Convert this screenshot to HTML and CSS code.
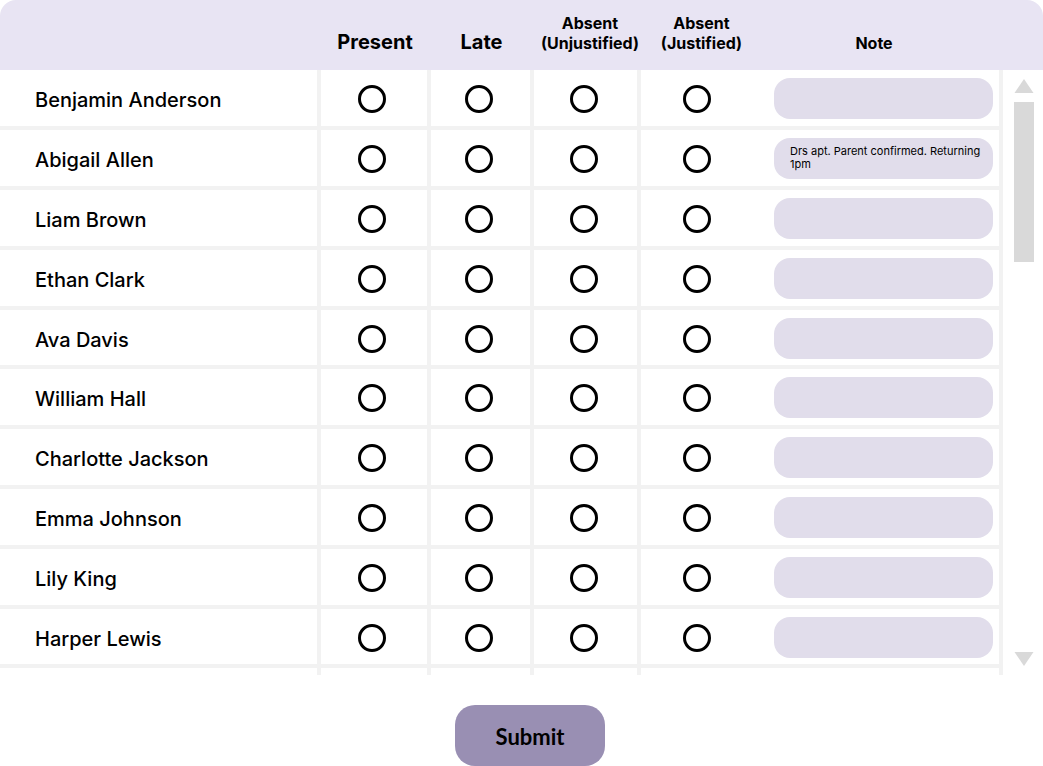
FILE: index.html
```html
<!DOCTYPE html>
<html lang="en">
<head>
<meta charset="utf-8">
<meta name="viewport" content="width=device-width, initial-scale=1">
<title>Attendance</title>
<link rel="stylesheet" href="styles.css">
</head>
<body>
<form class="attendance">
  <div class="sheet">
    <table class="roster">
      <colgroup>
        <col class="col-name"><col class="col-present"><col class="col-late"><col class="col-unjustified"><col class="col-justified"><col class="col-note">
      </colgroup>
      <thead>
        <tr>
          <td></td>
          <th scope="col" class="large">Present</th>
          <th scope="col" class="large">Late</th>
          <th scope="col" class="small">Absent<br>(Unjustified)</th>
          <th scope="col" class="small">Absent<br>(Justified)</th>
          <th scope="col" class="note-head">Note</th>
        </tr>
      </thead>
      <tbody>
        <tr>
          <th scope="row">Benjamin Anderson</th>
          <td><input type="radio" name="s1" aria-label="Present"></td>
          <td><input type="radio" name="s1" aria-label="Late"></td>
          <td><input type="radio" name="s1" aria-label="Absent (Unjustified)"></td>
          <td class="open"><input type="radio" name="s1" aria-label="Absent (Justified)"></td>
          <td class="note"><textarea rows="2" aria-label="Note"></textarea></td>
        </tr>
        <tr>
          <th scope="row">Abigail Allen</th>
          <td><input type="radio" name="s2" aria-label="Present"></td>
          <td><input type="radio" name="s2" aria-label="Late"></td>
          <td><input type="radio" name="s2" aria-label="Absent (Unjustified)"></td>
          <td class="open"><input type="radio" name="s2" aria-label="Absent (Justified)"></td>
          <td class="note"><textarea rows="2" aria-label="Note">Drs apt. Parent confirmed. Returning 1pm</textarea></td>
        </tr>
        <tr>
          <th scope="row">Liam Brown</th>
          <td><input type="radio" name="s3" aria-label="Present"></td>
          <td><input type="radio" name="s3" aria-label="Late"></td>
          <td><input type="radio" name="s3" aria-label="Absent (Unjustified)"></td>
          <td class="open"><input type="radio" name="s3" aria-label="Absent (Justified)"></td>
          <td class="note"><textarea rows="2" aria-label="Note"></textarea></td>
        </tr>
        <tr>
          <th scope="row">Ethan Clark</th>
          <td><input type="radio" name="s4" aria-label="Present"></td>
          <td><input type="radio" name="s4" aria-label="Late"></td>
          <td><input type="radio" name="s4" aria-label="Absent (Unjustified)"></td>
          <td class="open"><input type="radio" name="s4" aria-label="Absent (Justified)"></td>
          <td class="note"><textarea rows="2" aria-label="Note"></textarea></td>
        </tr>
        <tr>
          <th scope="row">Ava Davis</th>
          <td><input type="radio" name="s5" aria-label="Present"></td>
          <td><input type="radio" name="s5" aria-label="Late"></td>
          <td><input type="radio" name="s5" aria-label="Absent (Unjustified)"></td>
          <td class="open"><input type="radio" name="s5" aria-label="Absent (Justified)"></td>
          <td class="note"><textarea rows="2" aria-label="Note"></textarea></td>
        </tr>
        <tr>
          <th scope="row">William Hall</th>
          <td><input type="radio" name="s6" aria-label="Present"></td>
          <td><input type="radio" name="s6" aria-label="Late"></td>
          <td><input type="radio" name="s6" aria-label="Absent (Unjustified)"></td>
          <td class="open"><input type="radio" name="s6" aria-label="Absent (Justified)"></td>
          <td class="note"><textarea rows="2" aria-label="Note"></textarea></td>
        </tr>
        <tr>
          <th scope="row">Charlotte Jackson</th>
          <td><input type="radio" name="s7" aria-label="Present"></td>
          <td><input type="radio" name="s7" aria-label="Late"></td>
          <td><input type="radio" name="s7" aria-label="Absent (Unjustified)"></td>
          <td class="open"><input type="radio" name="s7" aria-label="Absent (Justified)"></td>
          <td class="note"><textarea rows="2" aria-label="Note"></textarea></td>
        </tr>
        <tr>
          <th scope="row">Emma Johnson</th>
          <td><input type="radio" name="s8" aria-label="Present"></td>
          <td><input type="radio" name="s8" aria-label="Late"></td>
          <td><input type="radio" name="s8" aria-label="Absent (Unjustified)"></td>
          <td class="open"><input type="radio" name="s8" aria-label="Absent (Justified)"></td>
          <td class="note"><textarea rows="2" aria-label="Note"></textarea></td>
        </tr>
        <tr>
          <th scope="row">Lily King</th>
          <td><input type="radio" name="s9" aria-label="Present"></td>
          <td><input type="radio" name="s9" aria-label="Late"></td>
          <td><input type="radio" name="s9" aria-label="Absent (Unjustified)"></td>
          <td class="open"><input type="radio" name="s9" aria-label="Absent (Justified)"></td>
          <td class="note"><textarea rows="2" aria-label="Note"></textarea></td>
        </tr>
        <tr>
          <th scope="row">Harper Lewis</th>
          <td><input type="radio" name="s10" aria-label="Present"></td>
          <td><input type="radio" name="s10" aria-label="Late"></td>
          <td><input type="radio" name="s10" aria-label="Absent (Unjustified)"></td>
          <td class="open"><input type="radio" name="s10" aria-label="Absent (Justified)"></td>
          <td class="note"><textarea rows="2" aria-label="Note"></textarea></td>
        </tr>
      </tbody>
      <tfoot aria-hidden="true">
        <tr><td></td><td></td><td></td><td></td><td class="open"></td><td></td></tr>
      </tfoot>
    </table>
    <div class="rail">
      <div class="rail-cap"></div>
      <div class="rail-track">
        <button type="button" class="arrow" aria-label="Scroll up"><svg width="20" height="14" viewBox="0 0 20 14"><path d="M10 0 19.500 14H.5Z"/></svg></button>
        <div class="thumb"></div>
        <button type="button" class="arrow arrow-down" aria-label="Scroll down"><svg width="20" height="14" viewBox="0 0 20 14"><path d="M10 14 19.500 0H.5Z"/></svg></button>
      </div>
    </div>
  </div>
  <div class="actions"><button type="submit" class="submit">Submit</button></div>
</form>
</body>
</html>
```
FILE: styles.css
```css
* { box-sizing: border-box; }

body {
  margin: 0;
  background: #fff;
  color: #000;
  font-family: Inter, "Liberation Sans", sans-serif;
}

.attendance { margin: 0; }

.sheet {
  display: flex;
  border-radius: 16px 16px 0 0;
  overflow: hidden;
}

.roster {
  flex: 1;
  table-layout: fixed;
  width: 100%;
  border-collapse: separate;
  border-spacing: 0;
}

.col-present { width: 110px; }
.col-late { width: 103px; }
.col-unjustified { width: 107px; }
.col-justified { width: 116px; }
.col-note { width: 246px; }

.roster th, .roster td { padding: 0; }

.roster thead tr { height: 70px; }
.roster thead th,
.roster thead td { background: #e8e4f3; }
.roster thead th {
  vertical-align: bottom;
  padding-bottom: 17px;
  font-size: 16px;
  line-height: 20px;
  font-weight: 700;
  text-align: center;
}
.roster thead .large { font-size: 20px; padding: 0 2px 18px 0; }
.roster thead .small { padding-left: 5px; }
.roster thead .note-head { padding-right: 12px; }

.roster tbody tr { height: 60px; }
.roster tbody tr:nth-child(5n) { height: 59px; }
.roster tbody th,
.roster tbody td {
  border-right: 4px solid #f2f2f2;
  border-bottom: 4px solid #f2f2f2;
  padding-top: 2px;
  vertical-align: middle;
  text-align: center;
}
.roster tbody th {
  padding: 4px 0 0 35px;
  font-size: 20px;
  line-height: 24px;
  font-weight: 500;
  text-align: left;
}
.roster tbody td { padding-right: 4px; }
.roster tbody .open { border-right: 0; }
.roster tbody .note { padding: 1px 6px 0 17px; }

.roster tfoot tr { height: 7px; }
.roster tfoot td { border-right: 4px solid #f2f2f2; }
.roster tfoot .open { border-right: 0; }

input[type="radio"] {
  appearance: none;
  display: block;
  width: 28px;
  height: 28px;
  margin: 0 auto;
  border: 3px solid #000;
  border-radius: 50%;
  background: #fff;
}
input[type="radio"]:checked {
  background: #000;
  box-shadow: inset 0 0 0 4px #fff;
}

textarea {
  display: block;
  width: 100%;
  height: 41px;
  margin: 0;
  padding: 7px 8px 7px 16px;
  border: 0;
  border-radius: 16px;
  background: #e1ddeb;
  color: #000;
  font: 400 11px/13px Inter, "Liberation Sans", sans-serif;
  resize: none;
  overflow: hidden;
}

.rail {
  display: flex;
  flex-direction: column;
  width: 40px;
}
.rail-cap { height: 70px; background: #e8e4f3; }
.rail-track {
  flex: 1;
  display: flex;
  flex-direction: column;
  gap: 9px;
  padding: 9px 9px 9px 11px;
}
.arrow {
  display: block;
  height: 14px;
  padding: 0;
  border: 0;
  background: none;
}
.arrow svg { display: block; fill: #d9d9d9; }
.arrow-down { margin-top: auto; }
.thumb { height: 160px; background: #d9d9d9; }

.actions {
  display: flex;
  justify-content: center;
  padding: 30px 0 0 17px;
}
.submit {
  width: 150px;
  height: 61px;
  padding: 2px 0 0;
  border: 0;
  border-radius: 20px;
  background: #998fb3;
  color: #000;
  font: 700 22px/28px Lato, "Noto Sans", sans-serif;
}
```
